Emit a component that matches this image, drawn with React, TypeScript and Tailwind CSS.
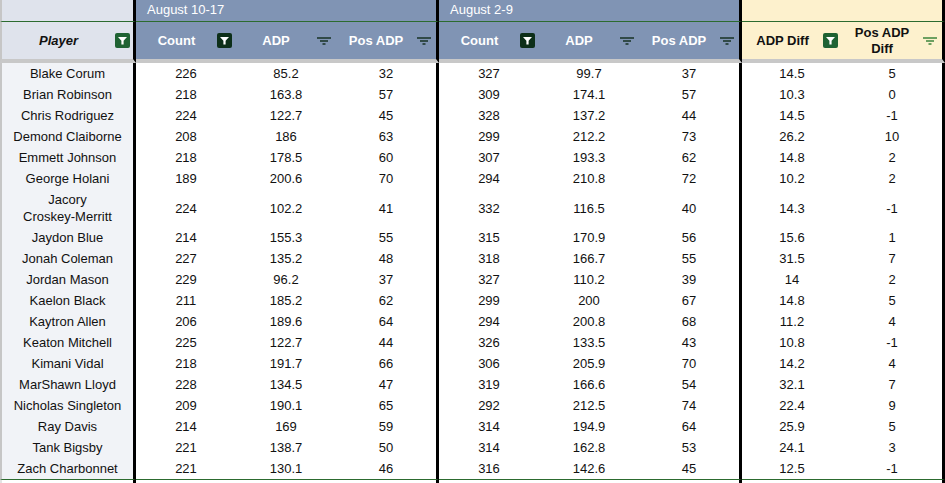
import * as React from "react";

type Row = [string, string, string, string, string, string, string, string, string];

const rows: Row[] = [
  ["Blake Corum", "226", "85.2", "32", "327", "99.7", "37", "14.5", "5"],
  ["Brian Robinson", "218", "163.8", "57", "309", "174.1", "57", "10.3", "0"],
  ["Chris Rodriguez", "224", "122.7", "45", "328", "137.2", "44", "14.5", "-1"],
  ["Demond Claiborne", "208", "186", "63", "299", "212.2", "73", "26.2", "10"],
  ["Emmett Johnson", "218", "178.5", "60", "307", "193.3", "62", "14.8", "2"],
  ["George Holani", "189", "200.6", "70", "294", "210.8", "72", "10.2", "2"],
  ["Jacory Croskey-Merritt", "224", "102.2", "41", "332", "116.5", "40", "14.3", "-1"],
  ["Jaydon Blue", "214", "155.3", "55", "315", "170.9", "56", "15.6", "1"],
  ["Jonah Coleman", "227", "135.2", "48", "318", "166.7", "55", "31.5", "7"],
  ["Jordan Mason", "229", "96.2", "37", "327", "110.2", "39", "14", "2"],
  ["Kaelon Black", "211", "185.2", "62", "299", "200", "67", "14.8", "5"],
  ["Kaytron Allen", "206", "189.6", "64", "294", "200.8", "68", "11.2", "4"],
  ["Keaton Mitchell", "225", "122.7", "44", "326", "133.5", "43", "10.8", "-1"],
  ["Kimani Vidal", "218", "191.7", "66", "306", "205.9", "70", "14.2", "4"],
  ["MarShawn Lloyd", "228", "134.5", "47", "319", "166.6", "54", "32.1", "7"],
  ["Nicholas Singleton", "209", "190.1", "65", "292", "212.5", "74", "22.4", "9"],
  ["Ray Davis", "214", "169", "59", "314", "194.9", "64", "25.9", "5"],
  ["Tank Bigsby", "221", "138.7", "50", "314", "162.8", "53", "24.1", "3"],
  ["Zach Charbonnet", "221", "130.1", "46", "316", "142.6", "45", "12.5", "-1"],
];

// columns that carry the thick black divider on their right
const divider = [true, false, false, true, false, false, true, false, true];

function FilterIcon({ dark }: { dark?: boolean }) {
  return (
    <svg width="15" height="15" viewBox="0 0 15 15" className="shrink-0">
      <rect x="0" y="0" width="15" height="15" rx="2" fill={dark ? "#0d2f19" : "#1f6333"} />
      <path d="M3 4h9l-3.4 3.8v3.7H6.4V7.8z" fill="#fff" />
    </svg>
  );
}

function SortIcon({ color }: { color: string }) {
  return (
    <svg width="16" height="10" viewBox="0 0 16 10" className="shrink-0">
      <line x1="1" y1="2" x2="15" y2="2" stroke={color} strokeWidth="1.4" />
      <line x1="4" y1="5" x2="12" y2="5" stroke={color} strokeWidth="1.4" />
      <line x1="6.5" y1="8" x2="9.5" y2="8" stroke={color} strokeWidth="1.4" />
    </svg>
  );
}

function HeaderCell({
  label,
  icon,
  tone,
  last,
  italic,
}: {
  label: React.ReactNode;
  icon: React.ReactNode;
  tone: "player" | "blue" | "yellow";
  last?: boolean;
  italic?: boolean;
}) {
  const bg =
    tone === "player" ? "bg-[#dfe3ec] text-[#111]" : tone === "blue" ? "bg-[#8094b4] text-white" : "bg-[#fdf1cd] text-[#111]";
  return (
    <div
      className={`${bg} ${last ? "border-r-[3px] border-r-black" : ""} ${
        tone === "player" ? "border-l-2 border-l-[#c6c6c6]" : ""
      } h-[41px] border-b-4 border-b-[#c8c8c8] flex items-center pr-[4px] font-bold text-[13px] leading-[16px]`}
    >
      <span className={`flex-1 text-center ${italic ? "italic" : ""}`}>{label}</span>
      {icon}
    </div>
  );
}

// keep hyphenated surnames together so the name breaks at the space only
function Name({ value }: { value: string }) {
  const parts = value.split(" ");
  return (
    <span>
      {parts.map((p, i) => (
        <React.Fragment key={i}>
          {i > 0 && " "}
          <span className="whitespace-nowrap">{p}</span>
        </React.Fragment>
      ))}
    </span>
  );
}

export default function App() {
  return (
    <div className="w-[945px] h-[483px] bg-white overflow-hidden font-['Liberation_Sans',Arial,sans-serif] text-[13px] text-[#111]">
      <div className="grid grid-cols-[136px_100px_100px_103px_100px_100px_103px_100px_103px]">
        {/* Group titles */}
        <div className="h-[22px] bg-[#dfe3ec] border-l-2 border-l-[#c6c6c6] border-r-[3px] border-r-black border-b border-b-[#2c6b2f]" />
        <div className="col-span-3 h-[22px] bg-[#8094b4] text-white pl-[11px] pb-[1px] flex items-center border-r-[3px] border-r-black border-b border-b-[#2c6b2f]">
          August 10-17
        </div>
        <div className="col-span-3 h-[22px] bg-[#8094b4] text-white pl-[11px] pb-[1px] flex items-center border-r-[3px] border-r-black border-b border-b-[#2c6b2f]">
          August 2-9
        </div>
        <div className="col-span-2 h-[22px] bg-[#fdf1cd] border-r-[3px] border-r-black border-b border-b-[#2c6b2f]" />

        {/* Column headers */}
        <HeaderCell label="Player" italic tone="player" last icon={<span className="mr-[-1px]"><FilterIcon /></span>} />
        <HeaderCell label="Count" tone="blue" icon={<FilterIcon dark />} />
        <HeaderCell label="ADP" tone="blue" icon={<SortIcon color="#0f2a1a" />} />
        <HeaderCell label="Pos ADP" tone="blue" last icon={<SortIcon color="#0f2a1a" />} />
        <HeaderCell label="Count" tone="blue" icon={<FilterIcon dark />} />
        <HeaderCell label="ADP" tone="blue" icon={<SortIcon color="#0f2a1a" />} />
        <HeaderCell label="Pos ADP" tone="blue" last icon={<SortIcon color="#0f2a1a" />} />
        <HeaderCell label="ADP Diff" tone="yellow" icon={<FilterIcon />} />
        <HeaderCell
          label={
            <>
              Pos ADP
              <br />
              Diff
            </>
          }
          tone="yellow"
          last
          icon={<SortIcon color="#2e7d32" />}
        />

        {/* Data */}
        {rows.map((row, ri) =>
          row.map((value, ci) => (
            <div
              key={`${ri}-${ci}`}
              className={`flex items-center justify-center text-center py-[2px] leading-[17px] ${
                ci === 0 ? "bg-[#f1f3f7] border-l-2 border-l-[#c6c6c6] px-[4px]" : "bg-white"
              } ${divider[ci] ? "border-r-[3px] border-r-black" : ""} ${
                ri === rows.length - 1 ? "border-b border-b-[#2c6b2f]" : ""
              }`}
            >
              {ci === 0 ? <Name value={value} /> : value}
            </div>
          ))
        )}

        {/* Continuation below the last row */}
        {divider.map((d, ci) => (
          <div
            key={`tail-${ci}`}
            className={`h-[6px] ${ci === 0 ? "border-l-2 border-l-[#e4e4e4]" : ""} ${
              d ? "border-r-[3px] border-r-black" : ""
            }`}
          />
        ))}
      </div>
    </div>
  );
}
